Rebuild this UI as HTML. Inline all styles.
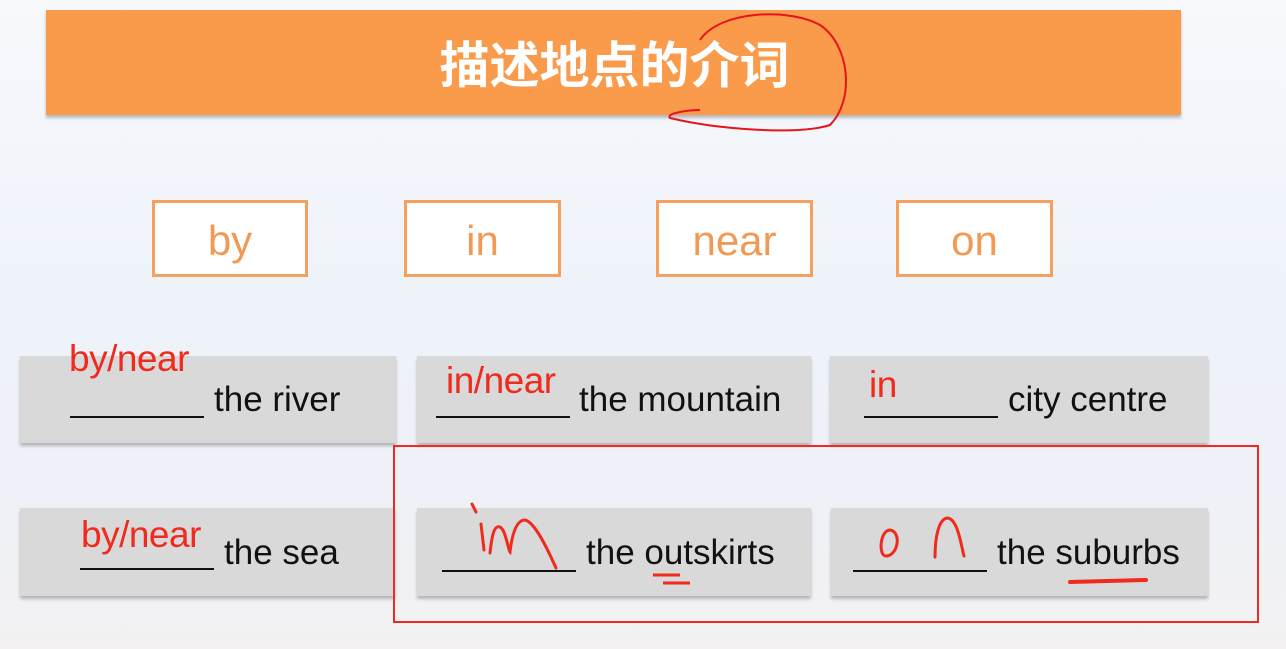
<!DOCTYPE html>
<html><head><meta charset="utf-8"><style>
*{margin:0;padding:0;box-sizing:border-box}
body{width:1286px;height:649px;overflow:hidden;position:relative;background:linear-gradient(180deg,#f7f9fc 0%,#eef3fa 45%,#eef1f7 75%,#f3f1f2 100%);font-family:"Liberation Sans","Noto Sans CJK SC",sans-serif}
.a{position:absolute}
.title{left:46px;top:10px;width:1135px;height:105px;background:#f99b4b;box-shadow:0 3px 3px rgba(0,0,0,.25);color:#fff;font:bold 50px "Noto Sans CJK SC",sans-serif;text-align:center;line-height:105px;padding-left:2px}
.pb{top:200px;height:77px;border:3px solid #f5a05c;background:#fff;color:#f09a55;font-size:42px;text-align:center;line-height:76px}
.card{background:#d9d9d9;box-shadow:0 3px 3px rgba(0,0,0,.25)}
.t{font-size:35px;color:#111;white-space:nowrap;letter-spacing:0}
.ln{border-bottom:2px solid #111;height:2px}
.r{color:#f02a1c;font-size:37px;white-space:nowrap;letter-spacing:-.5px}
svg{z-index:5}
</style></head><body>
<div class="a title">描述地点的介词</div>
<div class="a pb" style="left:152px;width:156px">by</div>
<div class="a pb" style="left:404px;width:157px">in</div>
<div class="a pb" style="left:656px;width:157px">near</div>
<div class="a pb" style="left:896px;width:157px">on</div>

<div class="a card" style="left:20px;top:356px;width:376px;height:87px"></div>
<div class="a card" style="left:417px;top:356px;width:394px;height:87px"></div>
<div class="a card" style="left:830px;top:356px;width:378px;height:87px"></div>
<div class="a card" style="left:20px;top:508px;width:375px;height:88px"></div>
<div class="a card" style="left:417px;top:508px;width:394px;height:88px"></div>
<div class="a card" style="left:831px;top:508px;width:377px;height:88px"></div>

<div class="a ln" style="left:70px;top:416px;width:134px"></div>
<div class="a t" style="left:214px;top:380px">the river</div>
<div class="a ln" style="left:436px;top:416px;width:134px"></div>
<div class="a t" style="left:579px;top:380px">the mountain</div>
<div class="a ln" style="left:864px;top:416px;width:134px"></div>
<div class="a t" style="left:1008px;top:380px">city centre</div>
<div class="a ln" style="left:80px;top:568px;width:134px"></div>
<div class="a t" style="left:224px;top:533px">the sea</div>
<div class="a ln" style="left:442px;top:570px;width:134px"></div>
<div class="a t" style="left:586px;top:533px">the outskirts</div>
<div class="a ln" style="left:853px;top:570px;width:134px"></div>
<div class="a t" style="left:997px;top:533px">the suburbs</div>

<div class="a r" style="left:69px;top:338px">by/near</div>
<div class="a r" style="left:446px;top:360px">in/near</div>
<div class="a r" style="left:869px;top:364px">in</div>
<div class="a r" style="left:81px;top:514px">by/near</div>
<svg class="a" style="left:0;top:0" width="1286" height="649">
<path d="M700 40 C720 10 790 8 820 25 C850 45 855 100 830 125 C800 135 720 130 670 118 C665 113 690 110 700 110" fill="none" stroke="#e8141a" stroke-width="2"/>
<rect x="394" y="446" width="864" height="176" fill="none" stroke="#ee2a22" stroke-width="2"/>
<path d="M472 504 L476 512 M481 524 L484 550 M490 553 C492 535 494 525 500 527 C506 530 508 550 510 552 C512 535 516 520 525 520 C535 522 548 550 556 568" fill="none" stroke="#f02a1c" stroke-width="3" stroke-linecap="round"/>
<path d="M890 530 C880 530 878 556 886 556 C898 556 902 532 890 530 Z" fill="none" stroke="#f02a1c" stroke-width="3"/>
<path d="M935 557 C935 540 938 518 948 518 C958 520 961 545 964 556" fill="none" stroke="#f02a1c" stroke-width="3" stroke-linecap="round"/>
<path d="M653 575 L680 575 M663 583 L690 583" stroke="#f02a1c" stroke-width="3"/>
<path d="M1070 582 L1146 580" stroke="#f02a1c" stroke-width="4" stroke-linecap="round"/>
</svg>
</body></html>
